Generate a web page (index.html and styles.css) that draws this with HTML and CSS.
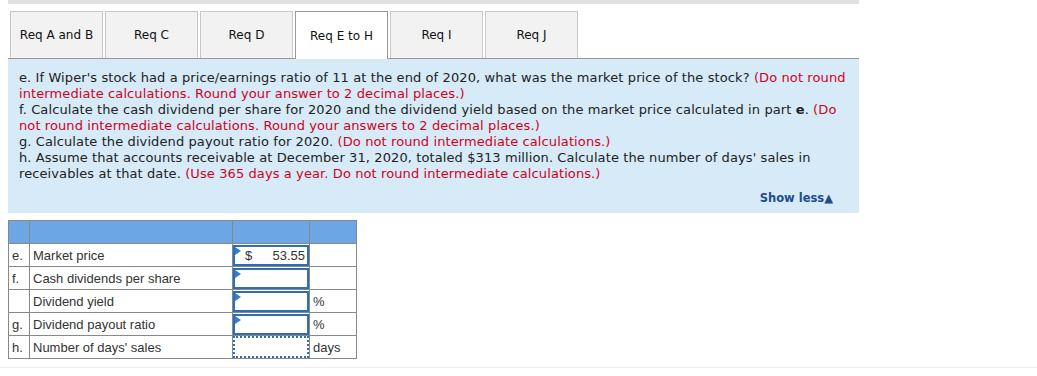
FILE: index.html
```html
<!DOCTYPE html>
<html lang="en">
<head>
    <meta charset="UTF-8">
    <title>Req E to H</title>
    <link rel="stylesheet" href="styles.css">
</head>
<body>
    <div class="page">
        <div class="topbar"></div>

        <div class="tabs">
            <div class="tab">Req A and B</div>
            <div class="tab">Req C</div>
            <div class="tab">Req D</div>
            <div class="tab active">Req E to H</div>
            <div class="tab">Req I</div>
            <div class="tab">Req J</div>
        </div>

        <div class="panel">
            <p class="question">
                e. If Wiper's stock had a price/earnings ratio of 11 at the end of 2020, what was the market price of the stock? <span class="note">(Do not round<br>intermediate calculations. Round your answer to 2 decimal places.)</span><br>
                f. Calculate the cash dividend per share for 2020 and the dividend yield based on the market price calculated in part <b>e</b>. <span class="note">(Do<br>not round intermediate calculations. Round your answers to 2 decimal places.)</span><br>
                g. Calculate the dividend payout ratio for 2020. <span class="note">(Do not round intermediate calculations.)</span><br>
                h. Assume that accounts receivable at December 31, 2020, totaled $313 million. Calculate the number of days' sales in<br>receivables at that date. <span class="note">(Use 365 days a year. Do not round intermediate calculations.)</span>
            </p>
            <div class="show-less">Show less&#9650;</div>
        </div>

        <table class="answers">
            <tr class="head">
                <td class="letter"></td>
                <td class="label"></td>
                <td class="value"></td>
                <td class="unit"></td>
            </tr>
            <tr>
                <td class="letter">e.</td>
                <td class="label">Market price</td>
                <td class="value"><div class="input"><span class="cur">$</span><span class="num">53.55</span></div></td>
                <td class="unit"></td>
            </tr>
            <tr>
                <td class="letter">f.</td>
                <td class="label">Cash dividends per share</td>
                <td class="value"><div class="input"></div></td>
                <td class="unit"></td>
            </tr>
            <tr>
                <td class="letter"></td>
                <td class="label">Dividend yield</td>
                <td class="value"><div class="input"></div></td>
                <td class="unit">%</td>
            </tr>
            <tr>
                <td class="letter">g.</td>
                <td class="label">Dividend payout ratio</td>
                <td class="value"><div class="input"></div></td>
                <td class="unit">%</td>
            </tr>
            <tr>
                <td class="letter">h.</td>
                <td class="label">Number of days' sales</td>
                <td class="value"><div class="input dotted"></div></td>
                <td class="unit">days</td>
            </tr>
        </table>
    </div>
    <div class="footer-line"></div>
</body>
</html>
```

FILE: styles.css
```css
body {
    margin: 0;
    background-color: #fff;
    font-family: "DejaVu Sans", Verdana, sans-serif;
    color: #222;
}
.page {
    width: 851px;
    padding: 0 8px;
}
.topbar {
    height: 4px;
    background-color: #e0e0e0;
}
.tabs {
    display: flex;
    gap: 2px;
    margin-top: 7px;
    padding-left: 2px;
}
.tab {
    width: 91px;
    height: 46px;
    border: 1px solid #c8c8c8;
    border-bottom: none;
    background-color: #f2f2f2;
    font-size: 12px;
    display: flex;
    align-items: center;
    justify-content: center;
    color: #111;
}
.tab.active {
    background-color: #fff;
    border-color: #999;
    height: 47px;
    margin-bottom: -1px;
    position: relative; /* sits over the panel border */
    z-index: 1;
}
.panel {
    background-color: #d6eaf8;
    border-top: 1px solid #999;
    padding: 11px 26px 8px 11px;
    height: 135px;
}
.question {
    margin: 0;
    font-size: 13px;
    letter-spacing: 0.1px;
    line-height: 16px;
    white-space: nowrap;
}
.question b {
    font-weight: bold;
}
.note {
    color: #d0021b;
}
.show-less {
    text-align: right;
    font-size: 11.5px;
    font-weight: bold;
    color: #1f4d8c;
    margin-top: 9px;
}
.answers {
    margin-top: 7px;
    border-collapse: collapse;
    font-family: "Liberation Sans", Arial, sans-serif;
    font-size: 13px;
    line-height: 15px;
    color: #333;
}
.answers td {
    border: 1px solid #888;
    height: 22px;
    padding: 0 3px;
    vertical-align: middle;
}
.answers .head td {
    background-color: #6ca6e4;
}
.answers .letter {
    width: 14px;
}
.answers .label {
    width: 196px;
}
.answers .value {
    width: 76px;
    padding: 0;
    vertical-align: top;
    position: relative;
}
.answers .unit {
    width: 40px;
    padding: 0 3px;
}
.input {
    height: 17px;
    margin-top: 1px;
    border: 2px solid #2f6db4;
    display: flex;
    align-items: center;
    justify-content: space-between;
    padding: 0 2px 0 10px;
    position: relative;
}
.input::before {
    content: "";
    position: absolute;
    left: 0;
    top: 0;
    border-left: 6px solid #2f7fd0;
    border-top: 4px solid transparent;
    border-bottom: 4px solid transparent;
}
.input.dotted {
    margin-top: 0;
    border: 2px dotted #2f6db4;
    height: 18px;
}
.input.dotted::before {
    display: none;
}
.footer-line {
    margin-top: 8px;
    border-top: 1px solid #eee;
}
```
